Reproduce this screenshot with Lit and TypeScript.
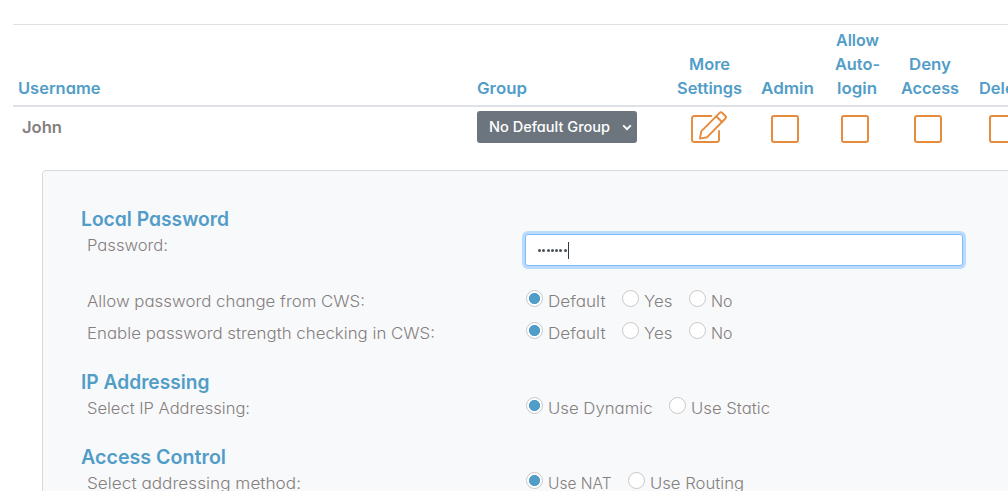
import { LitElement, html, css, svg } from "lit";
import { customElement, property } from "lit/decorators.js";

/** One line of text whose glyphs are widened so that it spans `span` pixels. */
@customElement("wide-text")
class WideText extends LitElement {
  @property() text = "";
  @property({ type: Number }) span = 0;

  static styles = css`
    :host {
      display: inline-block;
      white-space: nowrap;
    }
    span {
      display: inline-block;
      transform-origin: 0 50%;
    }
  `;

  updated() {
    const el = this.renderRoot.querySelector("span") as HTMLElement;
    el.style.transform = "none";
    const natural = el.getBoundingClientRect().width;
    el.style.transform = `scaleX(${this.span / natural})`;
    this.style.width = `${this.span}px`;
  }

  render() {
    return html`<span>${this.text}</span>`;
  }
}

type Word = [string, number];

const t = ([text, span]: Word) =>
  html`<wide-text .text=${text} .span=${span}></wide-text>`;

@customElement("radio-group")
class RadioGroup extends LitElement {
  @property({ attribute: false }) options: Word[] = [];

  static styles = css`
    :host {
      display: flex;
      gap: 16.5px;
      height: 24px;
    }
    .option {
      display: flex;
      gap: 5px;
    }
    .dot {
      box-sizing: border-box;
      width: 17px;
      height: 17px;
      margin-top: 1px;
      border: 1px solid #c8c8c8;
      border-radius: 50%;
      background: #fff;
    }
    .on {
      background: radial-gradient(circle, #529dc8 5.2px, #fff 5.9px);
    }
  `;

  render() {
    return this.options.map(
      (o, i) => html`<label class="option">
        <span class="dot ${i === 0 ? "on" : ""}"></span>${t(o)}
      </label>`
    );
  }
}

const columns: Word[][] = [
  [["More", 41], ["Settings", 65]],
  [["Admin", 53]],
  [["Allow", 43], ["Auto-", 45], ["login", 40]],
  [["Deny", 42], ["Access", 58]],
  [["Delete", 51]],
];

const editIcon = svg`
  <g fill="none" stroke="#e58b3d" stroke-width="1.9" stroke-linejoin="round" stroke-linecap="round">
    <path d="M20.3 5H3.2Q1 5 1 7.2V28.8Q1 31 3.2 31H25.8Q28 31 28 28.8V20"/>
    <path d="M9 27.6L10.2 20.3L28.6 1.8Q29.8 .6 31 1.7L34.4 5Q35.6 6.3 34.4 7.5L16.2 26.2Z"/>
    <path d="M25.2 5.3L31 11"/>
  </g>`;

@customElement("app-root")
class AppRoot extends LitElement {
  static styles = css`
    :host {
      display: block;
      box-sizing: border-box;
      width: 1008px;
      height: 491px;
      overflow: hidden;
      padding: 24px 0 0 13px;
      background: #fff;
      color: #857f7e;
      font: 300 16px/24px Inter, "Open Sans", sans-serif;
      font-feature-settings: "cv11", "ss03";
    }
    .head,
    .row {
      display: grid;
      grid-template-columns: 454px 195px 84px 72px 68px 78px 71px;
      padding-left: 5px;
    }
    .head {
      box-sizing: border-box;
      height: 83px;
      align-items: end;
      padding-bottom: 5px;
      border-top: 1px solid #dee2e6;
      border-bottom: 2px solid #dee2e6;
      color: #529dc8;
      font-weight: 580;
    }
    .group {
      padding-left: 5px;
    }
    .stack {
      display: flex;
      flex-direction: column;
      align-items: center;
    }
    .row {
      height: 63px;
      align-items: start;
    }
    .name {
      padding: 8px 0 0 4px;
      font-weight: 580;
    }
    .select {
      display: flex;
      box-sizing: border-box;
      align-items: center;
      justify-content: space-between;
      width: 160px;
      height: 32px;
      margin-top: 4px;
      padding: 0 5px 0 12px;
      border-radius: 3px;
      background: #6c757d;
      color: #fff;
      font-size: 14px;
      font-weight: 450;
    }
    .chevron {
      width: 10px;
      height: 7px;
    }
    .edit {
      width: 36px;
      height: 32px;
      margin: 4px 0 0 24px;
    }
    .box {
      box-sizing: border-box;
      width: 28px;
      height: 28px;
      margin: 8px 4px 0 0;
      justify-self: center;
      border: 2px solid #e58b3d;
      border-radius: 3px;
    }
    .panel {
      box-sizing: border-box;
      width: 1000px;
      height: 400px;
      margin-left: 29px;
      padding: 36px 0 0 38px;
      border: 1px solid #d8dadc;
      border-radius: 4px;
      background: #f8f9fb;
    }
    .title {
      height: 26px;
      color: #529dc8;
      font-size: 20px;
      font-weight: 600;
      line-height: 25px;
    }
    .field {
      display: grid;
      grid-template-columns: 439px 438px;
      height: 32px;
      padding-left: 6px;
    }
    .password {
      height: 56px;
    }
    .input {
      display: flex;
      align-items: center;
      box-sizing: border-box;
      width: 438px;
      height: 32px;
      margin: 1px 0 0 -1px;
      padding-left: 12px;
      border: 1px solid #80bdff;
      border-radius: 3px;
      background: #fff;
      box-shadow: 0 0 0 3px #badbfc;
    }
    .bullets {
      display: flex;
      gap: 1.25px;
    }
    .bullet {
      width: 3px;
      height: 3px;
      border-radius: 1.5px;
      background: #495057;
    }
    .caret {
      width: 1px;
      height: 17px;
      margin-left: 1px;
      background: #343a40;
    }
    .last {
      height: 49px;
    }
  `;

  field(label: Word, options: Word[], last = false) {
    return html`<div class="field ${last ? "last" : ""}">
      ${t(label)}<radio-group .options=${options}></radio-group>
    </div>`;
  }

  render() {
    const yesNo: Word[] = [["Default", 57.5], ["Yes", 28.5], ["No", 21.5]];
    return html`
      <div class="head">
        <div>${t(["Username", 82.5])}</div>
        <div class="group">${t(["Group", 50])}</div>
        ${columns.map((c) => html`<div class="stack">${c.map(t)}</div>`)}
      </div>
      <div class="row">
        <div class="name">${t(["John", 40])}</div>
        <div class="group">
          <div class="select">
            ${t(["No Default Group", 121])}
            <svg class="chevron" viewBox="0 0 10 7">
              <path d="M1.2 1.3L5 5.1L8.8 1.3" fill="none" stroke="#fff" stroke-width="1.9" />
            </svg>
          </div>
        </div>
        <svg class="edit" viewBox="0 0 36 32">${editIcon}</svg>
        ${[0, 1, 2, 3].map(() => html`<div class="box"></div>`)}
      </div>
      <div class="panel">
        <div class="title">${t(["Local Password", 148])}</div>
        <div class="field password">
          ${t(["Password:", 81])}
          <div class="input">
            <div class="bullets">
              ${Array.from({ length: 7 }, () => html`<i class="bullet"></i>`)}
            </div>
            <div class="caret"></div>
          </div>
        </div>
        ${this.field(["Allow password change from CWS:", 278], yesNo)}
        ${this.field(["Enable password strength checking in CWS:", 348], yesNo, true)}
        <div class="title">${t(["IP Addressing", 128.5])}</div>
        ${this.field(["Select IP Addressing:", 163], [["Use Dynamic", 104.5], ["Use Static", 79]], true)}
        <div class="title">${t(["Access Control", 145])}</div>
        ${this.field(["Select addressing method:", 214], [["Use NAT", 63.5], ["Use Routing", 94]])}
      </div>
    `;
  }
}
